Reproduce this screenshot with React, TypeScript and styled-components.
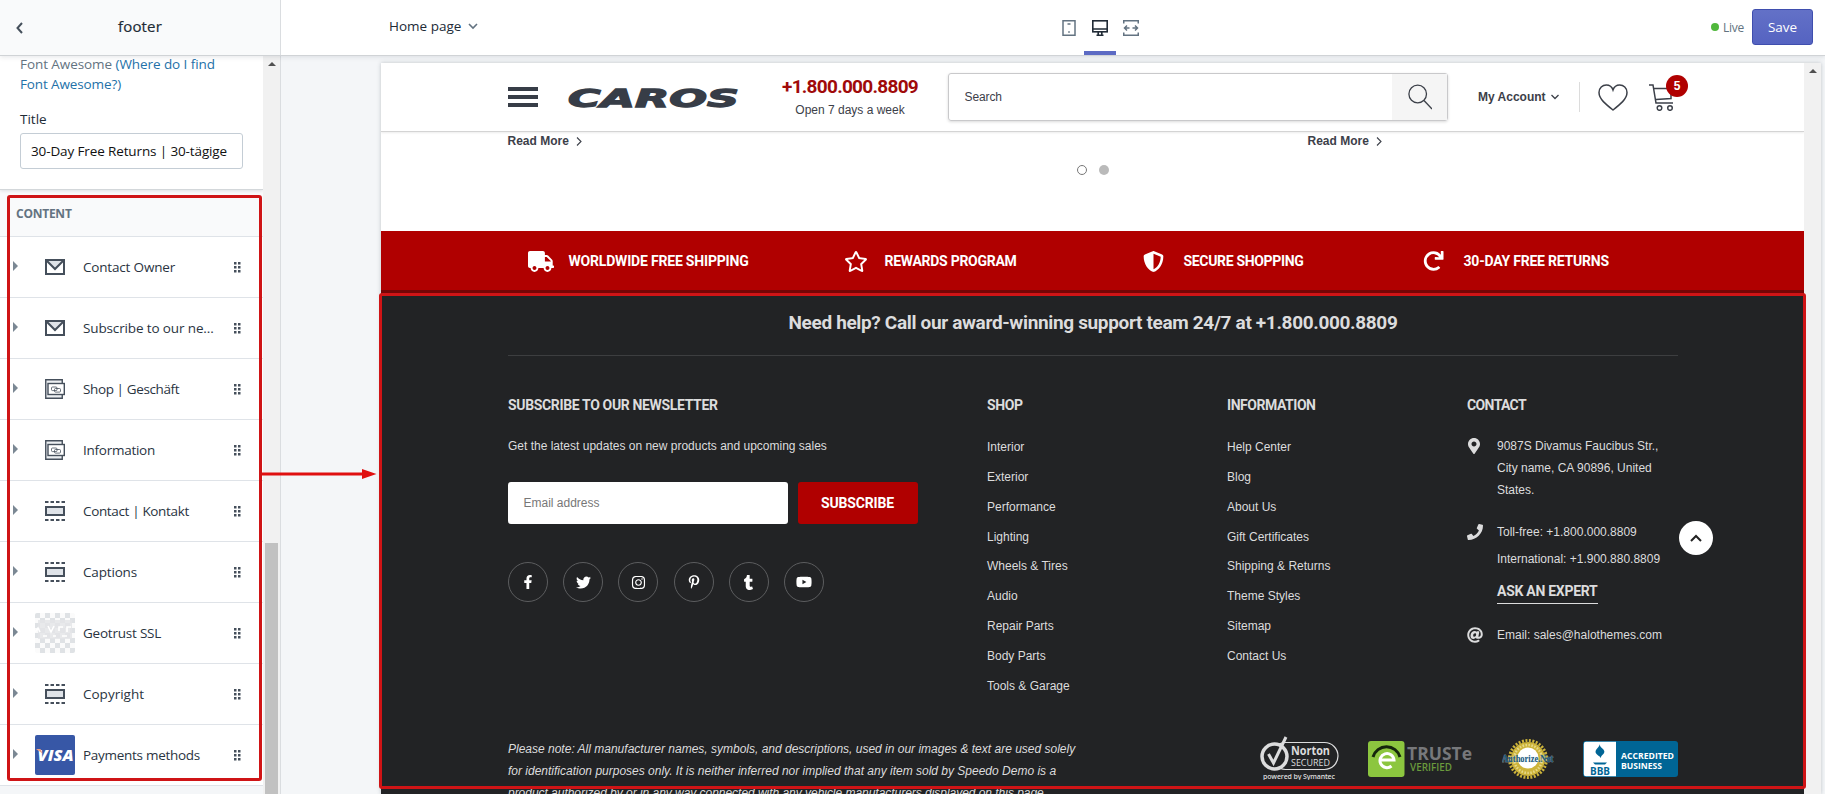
import React from "react";
import styled, { createGlobalStyle, css } from "styled-components";
import { FaTruck, FaRegStar, FaShieldAlt, FaRedo, FaFacebookF, FaTwitter, FaInstagram, FaPinterestP, FaTumblr, FaYoutube, FaMapMarkerAlt, FaPhone, FaAt } from "react-icons/fa";

const ui = `"Open Sans", "Noto Sans", sans-serif`;
const arial = `"Liberation Sans", Arial, sans-serif`;
const display = `Roboto, "Liberation Sans", sans-serif`;

const Global = createGlobalStyle`
  * { box-sizing: border-box; }
  body { margin: 0; background: #f4f6f8; font-family: ${ui}; overflow: hidden; }
  svg { display: block; }
`;

const T = styled.span<{ $ls?: number }>`
  letter-spacing: ${(p) => p.$ls ?? 0}px;
  white-space: nowrap;
`;

const Screen = styled.div`
  position: relative;
  display: flex;
  flex-direction: column;
  width: 1825px;
  height: 794px;
  overflow: hidden;
`;
const TopBar = styled.header`
  display: flex;
  height: 56px;
  flex: none;
  background: #fff;
  border-bottom: 1px solid #d0d3d6;
  position: relative;
  z-index: 2;
  box-shadow: 0 1px 5px rgba(33, 43, 54, 0.12);
`;
const SideTitle = styled.div`
  display: flex;
  align-items: center;
  width: 281px;
  background: #f9fafb;
  border-right: 1px solid #dadde0;
  padding: 0 0 0 16px;
  font-size: 15px;
  font-weight: 500;
  color: #212b36;
  & > span { margin: 0 0 4px 95px; -webkit-text-stroke: 0.2px #212b36; }
`;
const PagePicker = styled.div`
  display: flex;
  align-items: center;
  gap: 7px;
  width: 674px;
  padding: 0 0 3px 108px;
  font-size: 13.5px;
  color: #212b36;
`;
const Devices = styled.div`
  display: flex;
  margin-left: 98px;
`;
const Device = styled.div<{ $on?: boolean; $w?: number }>`
  display: flex;
  align-items: center;
  justify-content: center;
  width: ${(p) => p.$w ?? 32}px;
  height: 55px;
  border-bottom: 4px solid ${(p) => (p.$on ? "#5c6ac4" : "transparent")};
  padding-top: 5px;
  color: ${(p) => (p.$on ? "#212b36" : "#637381")};
`;
const Status = styled.div`
  display: flex;
  align-items: center;
  margin-left: auto;
  padding: 0 12px 1px 0;
  font-size: 12px;
  color: #637381;
`;
const LiveDot = styled.i`
  width: 8px;
  height: 8px;
  margin-right: 4px;
  border-radius: 50%;
  background: #50b83c;
`;
const SaveButton = styled.button`
  width: 61px;
  height: 36px;
  margin-left: 8px;
  padding: 0 0 1px;
  border: 1px solid #3f4eae;
  border-radius: 3px;
  background: linear-gradient(#6371c7, #5563c1);
  color: #fff;
  font: 13.5px ${ui};
`;

const Body = styled.div`
  display: flex;
  flex: 1;
  min-height: 0;
`;
const Sidebar = styled.aside`
  display: flex;
  width: 281px;
  border-right: 1px solid #dadde0;
`;
const Panel = styled.div`
  width: 263px;
  height: 738px;
  overflow: hidden;
`;
const Settings = styled.div`
  position: relative;
  height: 134px;
  padding: 0 20px;
  background: #fff;
  border-bottom: 1px solid #d3d7da;
  box-shadow: 0 1px 3px rgba(33, 43, 54, 0.12);
  font-size: 13.5px;
`;
const Hint = styled.p`
  margin: 0;
  line-height: 20px;
  height: 38px;
  display: flex;
  flex-direction: column;
  justify-content: flex-end;
  color: #637381;
  a { color: #2371a8; }
`;
const FieldLabel = styled.div`
  margin-top: 15px;
  line-height: 20px;
  color: #212b36;
`;
const Field = styled.div`
  display: flex;
  align-items: center;
  height: 36px;
  margin-top: 4px;
  padding: 0 0 1px 10px;
  border: 1px solid #c4cdd5;
  border-radius: 3px;
  color: #111;
`;
const GroupTitle = styled.div`
  height: 47px;
  padding: 14px 16px 0;
  background: #f9fafb;
  border-bottom: 1px solid #dfe3e8;
  font-size: 12px;
  line-height: 20px;
  font-weight: 700;
  letter-spacing: -0.25px;
  color: #637381;
`;
const Row = styled.div`
  display: flex;
  align-items: center;
  height: 61px;
  padding: 0 22px 0 13px;
  background: #fff;
  border-bottom: 1px solid #dfe3e8;
  font-size: 13.5px;
  color: #2a343f;
`;
const Caret = styled.i`
  margin-bottom: 2px;
  border-left: 5px solid #7b8894;
  border-top: 5px solid transparent;
  border-bottom: 5px solid transparent;
`;
const RowIcon = styled.div`
  display: flex;
  align-items: center;
  justify-content: center;
  width: 40px;
  height: 40px;
  margin: 0 8px 0 17px;
`;
const Grip = styled.div`
  margin-left: auto;
`;
const Scrollbar = styled.div`
  width: 17px;
  flex: none;
  display: flex;
  flex-direction: column;
  align-items: center;
  background: #f1f1f1;
  padding-top: 6px;
`;
const ScrollUp = styled.i`
  border: 4px solid transparent;
  border-top: 0;
  border-bottom-color: #505050;
`;
const Thumb = styled.i`
  width: 13px;
  flex: 1;
  margin-top: 477px;
  background: #c1c1c1;
`;

const Stage = styled.main`
  flex: 1;
  display: flex;
  padding: 7px 4px 0 100px;
`;
const Preview = styled.div`
  display: flex;
  width: 1440px;
  height: 731px;
  overflow: hidden;
  background: #fff;
  box-shadow: 0 0 4px rgba(33, 43, 54, 0.25);
`;
const Site = styled.div`
  width: 1423px;
  font-family: ${arial};
  font-size: 12px;
  overflow: hidden;
`;
const SiteHeader = styled.div`
  display: flex;
  align-items: center;
  height: 69px;
  padding-left: 127px;
  border-bottom: 1px solid #d4d4d4;
  box-shadow: 0 1px 2px rgba(0, 0, 0, 0.08);
  color: #3c4049;
`;
const Burger = styled.div`
  display: grid;
  gap: 4px;
  width: 30px;
  margin-right: 30px;
  i { height: 4px; background: #373d47; }
`;
const Logo = styled.svg`
  overflow: visible;
`;
const Phone = styled.div`
  display: flex;
  flex-direction: column;
  align-items: center;
  width: 136px;
  margin: 3px 0 0 43px;
  line-height: 23px;
  strong { font: 700 19px/24px ${display}; color: #a00a0a; }
`;
const SearchBox = styled.div`
  display: flex;
  align-items: center;
  width: 500px;
  height: 48px;
  margin-left: 30px;
  padding-left: 15.5px;
  border: 1px solid #c9c9cb;
  border-radius: 3px;
  box-shadow: 0 1px 3px rgba(0, 0, 0, 0.15);
`;
const SearchButton = styled.div`
  display: flex;
  align-items: center;
  justify-content: center;
  width: 55px;
  height: 46px;
  margin-left: auto;
  background: #f5f5f5;
`;
const Account = styled.div`
  display: flex;
  align-items: center;
  gap: 5px;
  height: 30px;
  width: 102px;
  margin-left: 30px;
  border-right: 1px solid #dcdcdc;
  font-weight: 700;
`;
const HeartIcon = styled.svg`
  margin-left: 18px;
`;
const Cart = styled.div`
  position: relative;
  margin-left: 21px;
`;
const Badge = styled.span`
  position: absolute;
  left: 17px;
  top: -9px;
  width: 22px;
  height: 22px;
  border-radius: 50%;
  background: #b00000;
  color: #fff;
  font: 700 12px/22px ${arial};
  text-align: center;
`;
const Articles = styled.div`
  display: flex;
  height: 26px;
  padding: 0 0 8px 126.5px;
`;
const ReadMore = styled.div`
  display: flex;
  flex: none;
  align-items: center;
  gap: 7px;
  width: 800px;
  font-weight: 700;
  color: #3c4049;
`;
const Dots = styled.div`
  display: flex;
  justify-content: center;
  gap: 12px;
  height: 73px;
  padding-top: 7px;
  margin-left: 1px;
  i { width: 10px; height: 10px; border-radius: 50%; background: #bababa; }
  i:first-child { background: #fff; border: 1px solid #777; }
`;
const Features = styled.div`
  display: flex;
  align-items: center;
  height: 62px;
  padding: 1px 0 0 147px;
  background: #b00000;
  border-bottom: 3px solid #750506;
  color: #fff;
  font: 700 14px ${display};
`;
const Feature = styled.div<{ $w: number; $icon: number }>`
  display: flex;
  align-items: center;
  width: ${(p) => p.$w}px;
  svg { width: ${(p) => p.$icon}px; margin-right: auto; }
`;
const FeatureText = styled.div<{ $w: number }>`
  width: ${(p) => p.$w}px;
`;
const Footer = styled.footer`
  height: 501px;
  padding: 0 126px 0 127px;
  background: #222325;
  color: #dcdcdd;
`;
const Help = styled.div`
  height: 63px;
  padding-top: 17px;
  border-bottom: 1px solid #3d3e40;
  text-align: center;
  font: 700 19px/26px ${display};
`;
const Columns = styled.div`
  display: grid;
  grid-template-columns: 479px 240px 240px 211px;
  height: 347px;
  padding-top: 39px;
`;
const Heading = styled.h4`
  margin: 0;
  height: 37px;
  font: 700 14px/20px ${display};
`;
const Link = styled.div`
  height: 29.85px;
  line-height: 31px;
`;
const Newsletter = styled.div`
  display: flex;
  gap: 10px;
  margin: 21px 0 38px;
`;
const Email = styled.div`
  width: 280px;
  height: 42px;
  padding-left: 15.5px;
  line-height: 42px;
  background: #fff;
  border-radius: 3px;
  color: #777;
`;
const Subscribe = styled.button`
  width: 120px;
  padding: 0 7px 1px 6px;
  border: 0;
  border-radius: 3px;
  background: #b00000;
  color: #fff;
  font: 700 14px ${display};
`;
const Socials = styled.div`
  display: flex;
  gap: 15.2px;
`;
const Social = styled.span`
  display: flex;
  align-items: center;
  justify-content: center;
  width: 40px;
  height: 40px;
  border: 1px solid #5c5d5f;
  border-radius: 50%;
  color: #fff;
`;
const Lead = styled.div`
  line-height: 29px;
  height: 29px;
`;
const ContactRow = styled.div<{ $h: number; $top?: number; $icon?: number; $shift?: number }>`
  display: grid;
  grid-template-columns: 30px 1fr;
  height: ${(p) => p.$h}px;
  padding-top: ${(p) => p.$top ?? 0}px;
  & > svg { margin: ${(p) => p.$icon ?? 5}px 0 0 ${(p) => p.$shift ?? 0}px; }
`;
const Lines = styled.div<{ $lh: number }>`
  display: flex;
  flex-direction: column;
  align-items: flex-start;
  line-height: ${(p) => p.$lh}px;
`;
const Expert = styled.div`
  margin-top: 8px;
  height: 23px;
  border-bottom: 1px solid #dcdcdd;
  font: 700 14px/20px ${display};
`;
const Bottom = styled.div`
  display: flex;
  justify-content: space-between;
`;
const Note = styled.p`
  margin: 0;
  padding-top: 35px;
  line-height: 22px;
  font-style: italic;
  display: flex;
  flex-direction: column;
`;
const Seals = styled.div`
  display: flex;
  padding-top: 31px;
`;

const frame = css`
  position: absolute;
  border: 3px solid #cf1416;
  border-radius: 3px;
  z-index: 3;
`;
const SideFrame = styled.div`
  ${frame}
  left: 7px; top: 195px; width: 255px; height: 586px;
`;
const FooterFrame = styled.div`
  ${frame}
  left: 379px; top: 293px; width: 1427px; height: 496px;
`;
const Pointer = styled.svg`
  position: absolute;
  left: 262px;
  top: 469px;
  z-index: 3;
`;
const ToTop = styled.div`
  position: absolute;
  left: 1679px;
  top: 521px;
  width: 34px;
  height: 34px;
  display: flex;
  align-items: center;
  justify-content: center;
  border-radius: 50%;
  background: #fff;
  z-index: 3;
`;

const Chevron = ({ w, h, d, s = 1.3, c = "#3c4049" }: { w: number; h: number; d: string; s?: number; c?: string }) => (
  <svg width={w} height={h} fill="none" stroke={c} strokeWidth={s}><path d={d} /></svg>
);

const MailIcon = () => (
  <svg width="20" height="16" fill="none" stroke="#454f5b" strokeWidth="2"><rect x="1" y="1" width="18" height="14" fill="#fff" /><path d="M2 2l8 8 8-8" fill="#dfe3e8" /></svg>
);
const MenuIcon = () => (
  <svg width="20" height="20" fill="#fff" stroke="#454f5b"><path d="M.75 .75h16.5v18.5h-16.5z" strokeWidth="1.4" fill="#eceff2" /><rect x="3" y="4.5" width="16.3" height="11" strokeWidth="1.4" /><rect x="6.500" y="8" width="5.500" height="3.600" rx="1" strokeWidth=".8" /><rect x="9.500" y="9.500" width="6" height="3.600" rx="1" strokeWidth=".8" fill="none" /></svg>
);
const SectionIcon = () => (
  <svg width="20" height="20" stroke="#454f5b" strokeWidth="2" fill="#dfe3e8"><rect x="1" y="6" width="18" height="8" /><path d="M0 1h20M0 19h20" strokeDasharray="3.500 2" /></svg>
);
const CheckerIcon = () => (
  <svg width="40" height="40">
    <defs><pattern id="checks" width="10" height="10" patternUnits="userSpaceOnUse"><rect width="5" height="5" fill="#dfe2e5" /><rect x="5" y="5" width="5" height="5" fill="#dfe2e5" /></pattern></defs>
    <rect width="40" height="40" rx="2" fill="#fbfbfb" /><rect width="40" height="40" rx="2" fill="url(#checks)" /><rect x="3" y="7" width="34" height="19" fill="#e3e5e7" opacity=".8" />
    <path d="M0 19l3-4 2 4M13 13l3 6 3-6M24 18v-4h4M32 19v-5h4M8 23h4M18 23h3M27 23h5" stroke="#fff" strokeWidth="1.600" fill="none" />
  </svg>
);
const VisaIcon = () => (
  <svg width="40" height="40"><rect width="40" height="40" rx="2" fill="#3757a6" /><text x="2.500" y="26" fill="#fff" fontFamily="Open Sans, sans-serif" fontWeight="800" fontStyle="italic" fontSize="16" textLength="36" lengthAdjust="spacingAndGlyphs">VISA</text><path d="M1 14h4.500l2 4.500z" fill="#f0a080" /></svg>
);

const rows: [React.ReactNode, string, number][] = [
  [<MailIcon />, "Contact Owner", -0.18],
  [<MailIcon />, "Subscribe to our ne...", -0.13],
  [<MenuIcon />, "Shop | Geschäft", -0.39],
  [<MenuIcon />, "Information", -0.26],
  [<SectionIcon />, "Contact | Kontakt", -0.35],
  [<SectionIcon />, "Captions", -0.17],
  [<CheckerIcon />, "Geotrust SSL", -0.22],
  [<SectionIcon />, "Copyright", 0],
  [<VisaIcon />, "Payments methods", -0.28],
];
const shop = ["Interior", "Exterior", "Performance", "Lighting", "Wheels & Tires", "Audio", "Repair Parts", "Body Parts", "Tools & Garage"];
const info = ["Help Center", "Blog", "About Us", "Gift Certificates", "Shipping & Returns", "Theme Styles", "Sitemap", "Contact Us"];
const socials = [<FaFacebookF size={14} />, <FaTwitter size={15} />, <FaInstagram size={15} />, <FaPinterestP size={14} />, <FaTumblr size={15} />, <FaYoutube size={16} />];

export default function App() {
  return (
    <Screen>
      <Global />
      <TopBar>
        <SideTitle>
          <Chevron w={7} h={12} d="M6 1L1.5 6L6 11" s={2} c="#454f5b" />
          <T $ls={0.17}>footer</T>
        </SideTitle>
        <PagePicker><T>Home page</T><Chevron w={10} h={7} d="M1 1l4 4l4-4" s={1.6} c="#637381" /></PagePicker>
        <Devices>
          <Device $w={31}><svg width="14" height="16" fill="none" stroke="currentColor" strokeWidth="1.5"><rect x="1" y=".75" width="12" height="14.5" /><path d="M5.5 4h3M6.2 12h1.6" /></svg></Device>
          <Device $on><svg width="16" height="16" fill="none" stroke="currentColor" strokeWidth="1.6"><rect x=".8" y=".8" width="14.4" height="11" /><path d="M1 9h14M4.5 15.2h7M6.2 12v3M9.8 12v3" /></svg></Device>
          <Device $w={30}><svg width="16" height="16" fill="none" stroke="currentColor" strokeWidth="1.5"><path d="M.75 3.5V.75h14.5V3.5M.75 12.5v2.75h14.5V12.5M1.500 8h5M9.500 8h5M4 5.500L1.500 8L4 10.500M12 5.500L14.500 8L12 10.500" /></svg></Device>
        </Devices>
        <Status><LiveDot /><T $ls={-0.25}>Live</T><SaveButton>Save</SaveButton></Status>
      </TopBar>
      <Body>
        <Sidebar>
          <Panel>
            <Settings>
              <Hint><T $ls={-0.07}>Font Awesome <a>(Where do I find</a></T><a><T $ls={-0.12}>Font Awesome?)</T></a></Hint>
              <FieldLabel>Title</FieldLabel>
              <Field><T $ls={-0.125}>30-Day Free Returns | 30-tägige</T></Field>
            </Settings>
            <GroupTitle>CONTENT</GroupTitle>
            {rows.map(([icon, label, ls]) => (
              <Row key={label}>
                <Caret /><RowIcon>{icon}</RowIcon><T $ls={ls}>{label}</T>
                <Grip><svg width="7" height="11" fill="#454f5b">{[0, 4].map((x) => [0, 4, 8].map((y) => <rect key={x + "," + y} x={x} y={y} width="2.500" height="2.500" />))}</svg></Grip>
              </Row>
            ))}
          </Panel>
          <Scrollbar><ScrollUp /><Thumb /></Scrollbar>
        </Sidebar>
        <Stage>
          <Preview>
            <Site>
              <SiteHeader>
                <Burger><i /><i /><i /></Burger>
                <Logo width="171" height="20"><text x="0" y="19.500" fill="#373d47" stroke="#373d47" strokeWidth="1.300" fontFamily="DejaVu Sans" fontWeight="700" fontStyle="italic" fontSize="25.500" textLength="171" lengthAdjust="spacingAndGlyphs">CAROS</text></Logo>
                <Phone><strong><T $ls={-0.72}>+1.800.000.8809</T></strong><T>Open 7 days a week</T></Phone>
                <SearchBox><T $ls={-0.1}>Search</T><SearchButton><svg width="24" height="26" fill="none" stroke="#3c4049" strokeWidth="1.300"><circle cx="9.700" cy="10" r="8.800" /><path d="M16 16.500l8 8.500" /></svg></SearchButton></SearchBox>
                <Account><T>My Account</T><Chevron w={8} h={6} d="M.5 1l3.5 3.5L7.5 1" /></Account>
                <HeartIcon width="30" height="27" fill="none" stroke="#3c4049" strokeWidth="1.500"><path d="M15 26C8 20.500 1 15 1 8.500C1 4 4.500 1 8.300 1C11.500 1 14 3 15 6C16 3 18.500 1 21.700 1C25.500 1 29 4 29 8.500C29 15 22 20.500 15 26Z" /></HeartIcon>
                <Cart><svg width="26" height="27" fill="none" stroke="#3c4049" strokeWidth="1.500"><path d="M0 1h4l3 18h17M5 4.500h17v10l-15 1" /><circle cx="10.500" cy="24" r="2.300" /><circle cx="21" cy="24" r="2.300" /></svg><Badge>5</Badge></Cart>
              </SiteHeader>
              <Articles>
                <ReadMore><T>Read More</T><Chevron w={6} h={9} d="M1 .5l4 4l-4 4" s={1.1} /></ReadMore>
                <ReadMore><T>Read More</T><Chevron w={6} h={9} d="M1 .5l4 4l-4 4" s={1.1} /></ReadMore>
              </Articles>
              <Dots><i /><i /></Dots>
              <Features>
                <Feature $w={316} $icon={26}><FaTruck size={21} /><FeatureText $w={275.5}><T $ls={-0.19}>WORLDWIDE FREE SHIPPING</T></FeatureText></Feature>
                <Feature $w={299} $icon={24}><FaRegStar size={21} /><FeatureText $w={258.5}><T $ls={-0.28}>REWARDS PROGRAM</T></FeatureText></Feature>
                <Feature $w={280} $icon={21}><FaShieldAlt size={21} /><FeatureText $w={239.5}><T $ls={-0.33}>SECURE SHOPPING</T></FeatureText></Feature>
                <Feature $w={200} $icon={21}><FaRedo size={20} /><FeatureText $w={159.5}><T $ls={-0.21}>30-DAY FREE RETURNS</T></FeatureText></Feature>
              </Features>
              <Footer>
                <Help><T $ls={-0.344}>Need help? Call our award-winning support team 24/7 at +1.800.000.8809</T></Help>
                <Columns>
                  <div>
                    <Heading><T $ls={-0.35}>SUBSCRIBE TO OUR NEWSLETTER</T></Heading>
                    <Lead>Get the latest updates on new products and upcoming sales</Lead>
                    <Newsletter><Email>Email address</Email><Subscribe><T $ls={-0.16}>SUBSCRIBE</T></Subscribe></Newsletter>
                    <Socials>{socials.map((s, i) => <Social key={i}>{s}</Social>)}</Socials>
                  </div>
                  <div><Heading><T $ls={-0.42}>SHOP</T></Heading>{shop.map((t) => <Link key={t}>{t}</Link>)}</div>
                  <div><Heading><T $ls={-0.457}>INFORMATION</T></Heading>{info.map((t) => <Link key={t}>{t}</Link>)}</div>
                  <div>
                    <Heading><T $ls={-0.62}>CONTACT</T></Heading>
                    <ContactRow $h={87} $top={3} $icon={3} $shift={-1}><FaMapMarkerAlt size={16} /><Lines $lh={22}><T>9087S Divamus Faucibus Str.,</T><T>City name, CA 90896, United</T><T>States.</T></Lines></ContactRow>
                    <ContactRow $h={103}><FaPhone size={16} /><Lines $lh={27}><T>Toll-free: +1.800.000.8809</T><T>International: +1.900.880.8809</T><Expert><T $ls={-0.275}>ASK AN EXPERT</T></Expert></Lines></ContactRow>
                    <ContactRow $h={30}><FaAt size={16} /><Lines $lh={27}><T>Email: sales@halothemes.com</T></Lines></ContactRow>
                  </div>
                </Columns>
                <Bottom>
                  <Note><T>Please note: All manufacturer names, symbols, and descriptions, used in our images &amp; text are used solely</T><T>for identification purposes only. It is neither inferred nor implied that any item sold by Speedo Demo is a</T><T $ls={-0.033}>product authorized by or in any way connected with any vehicle manufacturers displayed on this page.</T></Note>
                  <Seals>
                    <svg width="108" height="46" fill="none" stroke="#dcdcdd"><rect x="12" y="8.500" width="66" height="27" rx="13.500" strokeWidth="1.200" /><circle cx="14.500" cy="22.500" r="12.500" strokeWidth="3.500" fill="#222325" /><path d="M8.500 20l5 9L26 3" strokeWidth="3" /><text x="31" y="21" fill="#dcdcdd" stroke="none" fontFamily="Open Sans" fontWeight="700" fontSize="12" textLength="39" lengthAdjust="spacingAndGlyphs">Norton</text><text x="31" y="31.500" fill="#dcdcdd" stroke="none" fontFamily="Open Sans" fontSize="9" textLength="39" lengthAdjust="spacingAndGlyphs">SECURED</text><text x="3" y="44.500" fill="#dcdcdd" stroke="none" fontFamily="Open Sans" fontWeight="600" fontSize="7" textLength="72">powered by Symantec</text></svg>
                    <svg width="134" height="46"><rect y="7" width="36.500" height="36" rx="3" fill="#8cc63f" /><path d="M5 23a14 14 0 0 1 27 0" fill="none" stroke="#15260c" strokeWidth="3" /><path d="M12 26h14a7 7 0 1 0-2.500 6" fill="none" stroke="#fff" strokeWidth="3" /><text x="39" y="26" fill="#77787b" fontFamily="Open Sans" fontWeight="700" fontSize="17" textLength="65" lengthAdjust="spacingAndGlyphs">TRUSTe</text><text x="42" y="37" fill="#6a9a3c" fontFamily="Open Sans" fontWeight="600" fontSize="10.500" textLength="42" lengthAdjust="spacingAndGlyphs">VERIFIED</text></svg>
                    <svg width="81" height="46"><circle cx="26" cy="25" r="17" fill="#cdb43a" /><circle cx="26" cy="25" r="18.500" fill="none" stroke="#cdb43a" strokeWidth="3" strokeDasharray="2 1.500" /><circle cx="26" cy="25" r="14" fill="none" stroke="#e6d98a" strokeWidth="2.500" strokeDasharray="1.500 1.500" /><circle cx="26" cy="24" r="10.500" fill="#fff" /><text x="0" y="28" fill="#17597e" stroke="#dfeaf0" strokeWidth="1" paintOrder="stroke" strokeOpacity=".4" fontFamily="Liberation Serif" fontWeight="700" fontSize="10" textLength="51" lengthAdjust="spacingAndGlyphs">Authorize.Net</text></svg>
                    <svg width="95" height="46"><rect y="7" width="95" height="36" rx="3" fill="#006595" /><path d="M3 7.800H33V42.200H3Q.8 42.200 .8 40V10Q.8 7.800 3 7.800Z" fill="#fff" /><path d="M17 10c-1 4 6 5 4 9c-1 2-3 2-3 5c-2-3-7-4-5-8c1-2 3-3 4-6zM10 28.500h14l-2 2h-10z" fill="#006595" /><text x="7" y="40.500" fill="#006595" fontFamily="Open Sans" fontWeight="700" fontSize="10" textLength="20" lengthAdjust="spacingAndGlyphs">BBB</text><g fill="#fff" fontFamily="Open Sans" fontWeight="700" fontSize="9"><text x="38" y="24.500" textLength="53" lengthAdjust="spacingAndGlyphs">ACCREDITED</text><text x="38" y="34.500" textLength="41" lengthAdjust="spacingAndGlyphs">BUSINESS</text></g></svg>
                  </Seals>
                </Bottom>
              </Footer>
            </Site>
            <Scrollbar><ScrollUp /></Scrollbar>
          </Preview>
        </Stage>
      </Body>
      <SideFrame />
      <FooterFrame />
      <Pointer width="115" height="10" fill="#e01010"><path d="M0 3.500h100v3H0zM100 0l14.500 5L100 10z" /></Pointer>
      <ToTop><Chevron w={12} h={8} d="M1 7l5-5l5 5" s={2} c="#222" /></ToTop>
    </Screen>
  );
}
